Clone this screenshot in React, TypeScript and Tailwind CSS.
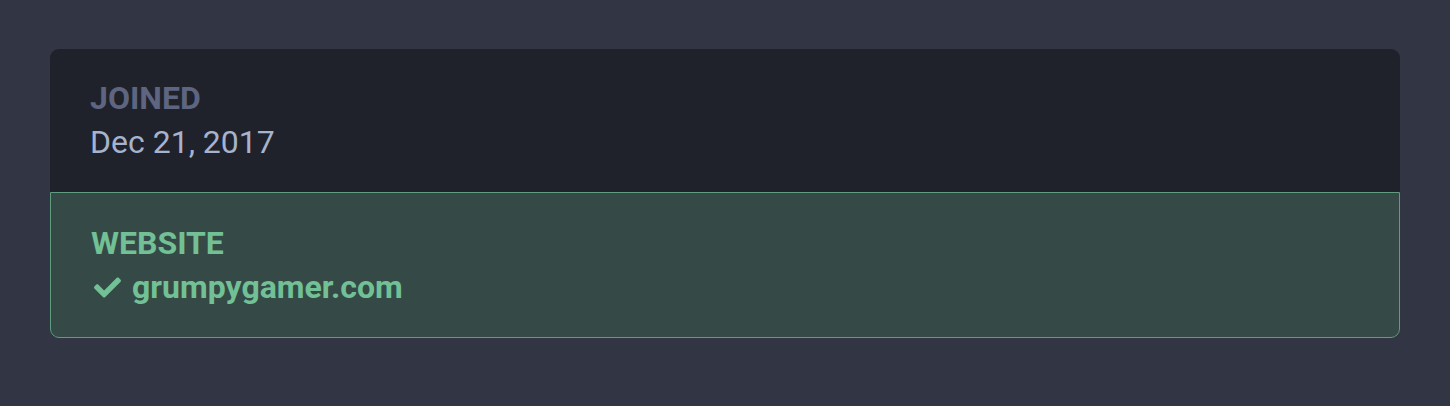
import React from 'react';
import { FaCheck } from 'react-icons/fa';

const App: React.FC = () => {
  return (
    <div className="min-h-[406px] bg-[#323544] px-[50px] pt-[49px] pb-[68px] font-['Roboto',sans-serif]">
      <div className="rounded-[9px] bg-[#1f222b]">
        {/* Joined */}
        <div className="px-10 pt-[27px] pb-[28px] text-[32px] leading-[44px]">
          <div className="font-bold uppercase text-[#5e6580]">Joined</div>
          <div className="text-[#a5b3cc]">Dec 21, 2017</div>
        </div>

        {/* Website */}
        <div className="rounded-b-[9px] border border-[#5f9c80] bg-[#354a46] px-10 py-[28px] text-[32px] leading-[44px] font-bold text-[#72c096]">
          <div className="uppercase">Website</div>
          <div className="flex items-center gap-[11px]">
            <FaCheck className="ml-[3px] h-[27px] w-[27px] shrink-0" />
            <span>grumpygamer.com</span>
          </div>
        </div>
      </div>
    </div>
  );
};

export default App;
